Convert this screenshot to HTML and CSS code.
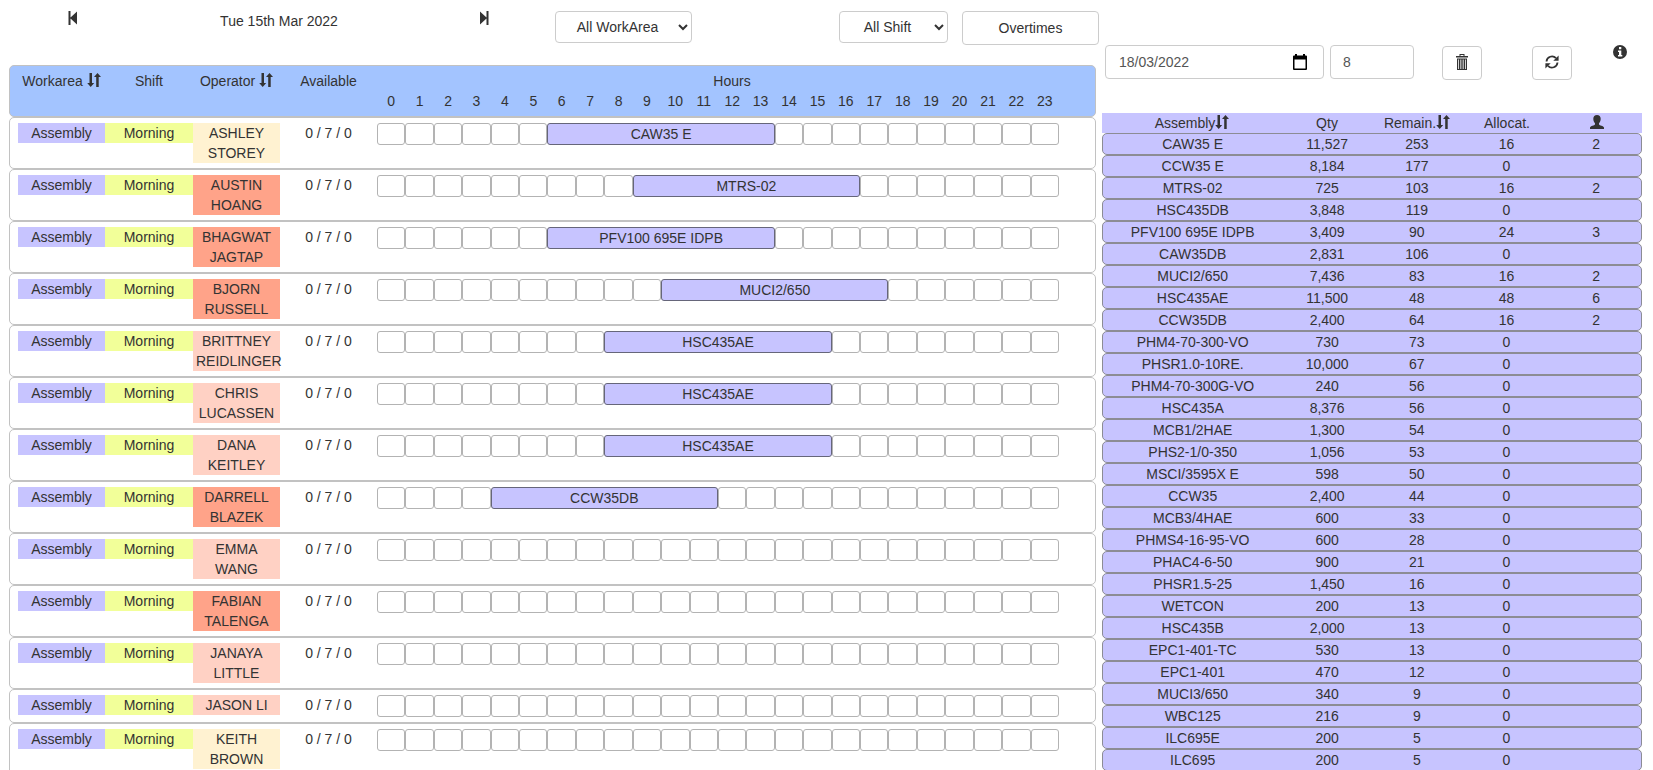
FILE: index.html
```html
<!DOCTYPE html>
<html lang="en-AU">
<head>
<meta charset="utf-8">
<title>Operator schedule</title>
<link rel="stylesheet" href="styles.css">
</head>
<body>
<svg class="sprite" aria-hidden="true">
  <symbol id="i-sort" viewBox="0 0 14 14"><path d="M2.500 0h2.500v10h2.200L3.700 14 .200 10h2.300zM9.200 14h2.500V4h2.300L10.500 0 7 4h2.200z"/></symbol>
  <symbol id="i-prev" viewBox="0 0 14 14"><path d="M2.500 0h2v6.500L11 .500v13L4.500 7.500V14h-2z"/></symbol>
  <symbol id="i-next" viewBox="0 0 14 14"><path d="M11.500 0h-2v6.500L3 .500v13l6.500-6V14h2z"/></symbol>
  <symbol id="i-trash" viewBox="0 0 14 16"><path fill-rule="evenodd" d="M4.500 0h5v2H13v1.500H1V2h3.500zM5.500 1v1h3V1zM2 4.500h10V16H2zM3.200 5.500V15H4V5.500zM5.400 5.500V15h.900V5.500zM7.700 5.500V15h.900V5.500zM10 5.500V15h.800V5.500z"/></symbol>
  <symbol id="i-refresh" viewBox="0 0 14 14"><path d="M1.500 6.500A5.500 5.500 0 0 1 11 3.200M12.500 7.500A5.500 5.500 0 0 1 3 10.800" fill="none" stroke="currentColor" stroke-width="1.800"/><path d="M13.600.500v5.300H8.300zM.400 13.500V8.200h5.300z"/></symbol>
  <symbol id="i-info" viewBox="0 0 14 14"><path fill-rule="evenodd" d="M7 0a7 7 0 1 0 0 14A7 7 0 0 0 7 0zM6 2h2.300v2.200H6zM5 5.500h3.300V10h1v1.500H5V10h1V7H5z"/></symbol>
  <symbol id="i-user" viewBox="0 0 14 14"><path d="M7 0c2.300 0 3.700 1.500 3.700 3.800C10.700 6 9.800 7.300 9 8.200v1.300c.500 1 4.500 1.300 5 3V14H0v-1.500c.500-1.700 4.500-2 5-3V8.200C4.200 7.300 3.300 6 3.300 3.800 3.300 1.500 4.700 0 7 0z"/></symbol>
  <symbol id="i-calendar" viewBox="0 0 14 16"><path fill-rule="evenodd" d="M2 0h2v1.500h6V0h2v1.500h1q1 0 1 1V15q0 1-1 1H1q-1 0-1-1V2.500q0-1 1-1h1zM1.500 5.500v9h11v-9z"/></symbol>
</svg>
<main class="page">
  <section class="schedule">
    <div class="toolbar">
      <button class="icon-btn" type="button" aria-label="Previous day"><svg class="icon"><use href="#i-prev"/></svg></button>
      <div class="today">Tue 15th Mar 2022</div>
      <button class="icon-btn" type="button" aria-label="Next day"><svg class="icon"><use href="#i-next"/></svg></button>
      <select class="select select-area" aria-label="Work area"><option>All WorkArea</option></select>
      <select class="select select-shift" aria-label="Shift"><option>All Shift</option></select>
      <button class="btn btn-overtimes" type="button">Overtimes</button>
    </div>
    <table class="board">
      <thead>
        <tr class="board-row board-head">
          <th>Workarea <svg class="icon"><use href="#i-sort"/></svg></th>
          <th>Shift</th>
          <th>Operator <svg class="icon"><use href="#i-sort"/></svg></th>
          <th>Available</th>
          <th class="hours-head">Hours</th>
          <th class="hours" id="hour-labels"></th>
        </tr>
      </thead>
      <tbody id="operators"></tbody>
    </table>
  </section>
  <section class="stock">
    <div class="filters">
      <div class="date-field">
        <input class="field" type="text" value="18/03/2022" aria-label="Due date">
        <svg class="calendar"><use href="#i-calendar"/></svg>
      </div>
      <input class="field field-hours" type="text" value="8" aria-label="Hours">
      <button class="btn btn-icon" type="button" aria-label="Delete"><svg class="icon icon-trash"><use href="#i-trash"/></svg></button>
      <button class="btn btn-icon" type="button" aria-label="Refresh"><svg class="icon"><use href="#i-refresh"/></svg></button>
      <button class="icon-btn" type="button" aria-label="Information"><svg class="icon"><use href="#i-info"/></svg></button>
    </div>
    <table class="jobs">
      <thead>
        <tr class="job-head">
          <th>Assembly<svg class="icon"><use href="#i-sort"/></svg></th>
          <th>Qty</th>
          <th>Remain.<svg class="icon"><use href="#i-sort"/></svg></th>
          <th>Allocat.</th>
          <th aria-label="Operators"><svg class="icon"><use href="#i-user"/></svg></th>
        </tr>
      </thead>
      <tbody id="jobs"></tbody>
    </table>
  </section>
</main>
<script src="app.js"></script>
</body>
</html>
```
FILE: styles.css
```css
* { box-sizing: border-box; }
html { overflow: hidden; }
body {
  margin: 0;
  background: #fff;
  color: #333;
  font: 14px/20px "Liberation Sans", Arial, sans-serif;
}
button, input, select { font: inherit; color: inherit; }
.sprite { display: none; }
.icon { width: 14px; height: 14px; fill: currentColor; vertical-align: -1px; }

.page {
  display: grid;
  grid-template-columns: 1090fr 540fr;
  column-gap: 3px;
  height: 100vh;
  padding: 0 11px 0 9px;
  overflow: hidden;
}

.toolbar {
  display: grid;
  grid-template-columns: 128fr 284fr 126fr 153fr 248fr 151fr;
  align-items: start;
  justify-items: center;
  height: 65px;
  padding-top: 11px;
}
.icon-btn { padding: 0; border: 0; background: none; line-height: 16px; }
.select {
  height: 32px;
  border: 1px solid #ccc;
  border-radius: 4px;
  background: #fff;
  text-align: center;
}
.select-area { width: 137px; }
.select-shift { width: 109px; justify-self: end; }
.btn {
  height: 34px;
  border: 1px solid #ccc;
  border-radius: 4px;
  background: #fff;
}
.btn-overtimes { width: 137px; justify-self: end; padding: 0; }

table, thead, tbody { display: block; }
th, td { display: block; min-width: 0; padding: 0; font-weight: normal; text-align: center; }

.board { margin-right: 3px; }
.board-row {
  display: grid;
  grid-template-columns: 87fr 88fr 87fr 97fr 682fr 28fr;
  align-items: start;
  padding: 5px 8px;
  border: 1px solid #c2c2c2;
  border-radius: 5px;
}
.board-head { background: #a3c4ff; }
.hours-head { grid-column: 5 / 7; }
.board-head .hours { grid-column: 5; }
.hours { display: grid; grid-template-columns: repeat(24, 1fr); }
.area { background: #c7c4ff; }
.shift { background: #f2ff99; }
.operator { padding: 0 3px; }
.level-low { background: #fff2d1; }
.level-mid { background: #ffd1c4; }
.level-high { background: #ffa389; }
.slot { height: 22px; border: 1px solid #b3b3b3; border-radius: 3px; }
.slot-booked { border-color: #66667a; background: #c7c4ff; }

.filters {
  display: grid;
  grid-template-columns: 5fr 2fr 2fr 2fr 1fr;
  align-items: start;
  justify-items: center;
  height: 113px;
  padding-top: 45px;
}
.date-field { position: relative; justify-self: stretch; margin: 0 3px; }
.field {
  display: block;
  width: 100%;
  height: 34px;
  padding: 6px 13px;
  border: 1px solid #ccc;
  border-radius: 4px;
  background: #fff;
  color: #555;
}
.field-hours { width: 84px; padding: 6px 12px; }
.calendar { position: absolute; top: 9px; right: 17px; width: 14px; height: 16px; fill: #000; }
.btn-icon { width: 40px; margin-top: 1px; padding: 0; }
.icon-trash { height: 16px; vertical-align: -2px; }

.job-head, .job {
  display: grid;
  grid-template-columns: 2fr 1fr 1fr 1fr 1fr;
  background: #c7c4ff;
}
.job { border: 1px solid #8c8c94; border-radius: 5px; }
```
FILE: app.js
```js
const operators = [
  ["ASHLEY STOREY", "low", 6, "CAW35 E"],
  ["AUSTIN HOANG", "high", 9, "MTRS-02"],
  ["BHAGWAT JAGTAP", "high", 6, "PFV100 695E IDPB"],
  ["BJORN RUSSELL", "high", 10, "MUCI2/650"],
  ["BRITTNEY REIDLINGER", "mid", 8, "HSC435AE"],
  ["CHRIS LUCASSEN", "mid", 8, "HSC435AE"],
  ["DANA KEITLEY", "mid", 8, "HSC435AE"],
  ["DARRELL BLAZEK", "high", 4, "CCW35DB"],
  ["EMMA WANG", "mid"],
  ["FABIAN TALENGA", "high"],
  ["JANAYA LITTLE", "mid"],
  ["JASON LI", "mid"],
  ["KEITH BROWN", "low"]
];
const jobs = [
  ["CAW35 E", "11,527", 253, 16, 2],
  ["CCW35 E", "8,184", 177, 0, ""],
  ["MTRS-02", "725", 103, 16, 2],
  ["HSC435DB", "3,848", 119, 0, ""],
  ["PFV100 695E IDPB", "3,409", 90, 24, 3],
  ["CAW35DB", "2,831", 106, 0, ""],
  ["MUCI2/650", "7,436", 83, 16, 2],
  ["HSC435AE", "11,500", 48, 48, 6],
  ["CCW35DB", "2,400", 64, 16, 2],
  ["PHM4-70-300-VO", "730", 73, 0, ""],
  ["PHSR1.0-10RE.", "10,000", 67, 0, ""],
  ["PHM4-70-300G-VO", "240", 56, 0, ""],
  ["HSC435A", "8,376", 56, 0, ""],
  ["MCB1/2HAE", "1,300", 54, 0, ""],
  ["PHS2-1/0-350", "1,056", 53, 0, ""],
  ["MSCI/3595X E", "598", 50, 0, ""],
  ["CCW35", "2,400", 44, 0, ""],
  ["MCB3/4HAE", "600", 33, 0, ""],
  ["PHMS4-16-95-VO", "600", 28, 0, ""],
  ["PHAC4-6-50", "900", 21, 0, ""],
  ["PHSR1.5-25", "1,450", 16, 0, ""],
  ["WETCON", "200", 13, 0, ""],
  ["HSC435B", "2,000", 13, 0, ""],
  ["EPC1-401-TC", "530", 13, 0, ""],
  ["EPC1-401", "470", 12, 0, ""],
  ["MUCI3/650", "340", 9, 0, ""],
  ["WBC125", "216", 9, 0, ""],
  ["ILC695E", "200", 5, 0, ""],
  ["ILC695", "200", 5, 0, ""]
];
const SHIFT_HOURS = 8;

function slots(start, job) {
  let html = "";
  for (let h = 0; h < 24; h++) {
    if (h === start) {
      html += `<div class="slot slot-booked" style="grid-column: span ${SHIFT_HOURS}">${job}</div>`;
      h += SHIFT_HOURS - 1;
    } else {
      html += '<div class="slot"></div>';
    }
  }
  return html;
}

document.getElementById("hour-labels").innerHTML =
  Array.from({ length: 24 }, (_, h) => `<span>${h}</span>`).join("");
document.getElementById("operators").innerHTML = operators.map(([name, level, start, job]) =>
  `<tr class="board-row"><td class="area">Assembly</td><td class="shift">Morning</td>` +
  `<td class="operator level-${level}">${name}</td><td>0 / 7 / 0</td>` +
  `<td class="hours">${slots(start, job)}</td></tr>`).join("");
document.getElementById("jobs").innerHTML = jobs.map(row =>
  `<tr class="job">${row.map(v => `<td>${v}</td>`).join("")}</tr>`).join("");
```
